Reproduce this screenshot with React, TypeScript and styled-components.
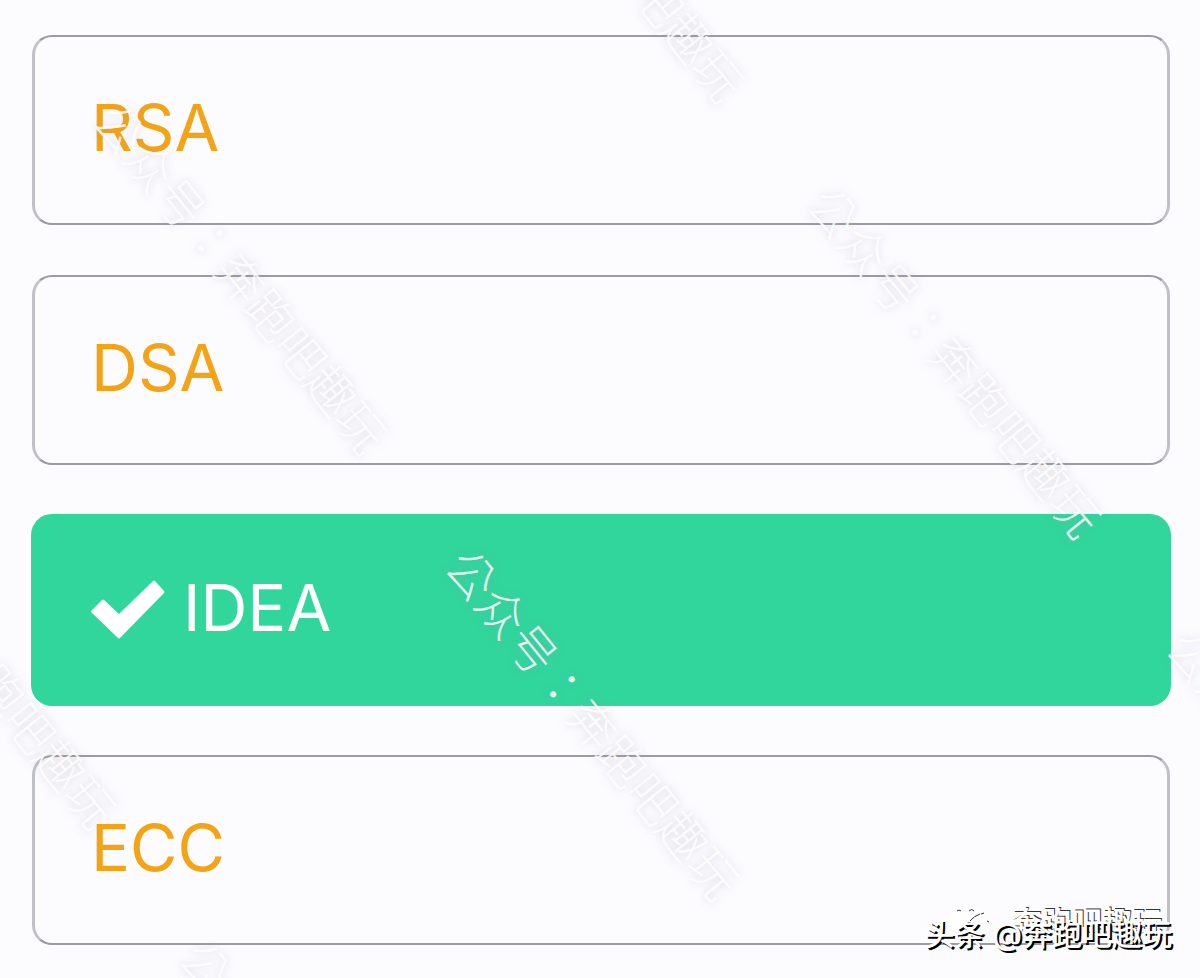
import React, { useState } from "react";
import styled, { createGlobalStyle } from "styled-components";

const GlobalStyle = createGlobalStyle`
  *, *::before, *::after { box-sizing: border-box; }
  body { margin: 0; background: #fcfbfe; }
`;

const Page = styled.main`
  position: relative;
  min-height: 100vh;
  padding: 35px 30px 33px 32px;
  overflow: hidden;
  font-family: Inter, "Noto Sans CJK SC", sans-serif;
`;

const Options = styled.fieldset`
  display: flex;
  flex-direction: column;
  gap: 50px;
  margin: 0;
  padding: 0;
  border: 0;
`;

const Option = styled.label<{ $selected: boolean }>`
  display: flex;
  align-items: center;
  gap: 18px;
  min-height: 190px;
  padding: 0 56px 4px;
  border-style: solid;
  border-width: 2px 3px;
  border-color: ${(p) => (p.$selected ? "#31d69d" : "#9c9ca2 #bfc0c8")};
  border-radius: 20px;
  background: ${(p) => (p.$selected ? "#31d69d" : "transparent")};
  box-shadow: ${(p) => (p.$selected ? "0 0 0 1px #31d69d" : "none")};
  color: ${(p) => (p.$selected ? "#ffffff" : "#f3a316")};
  font-size: 65px;
  line-height: 80px;
  cursor: pointer;
`;

const Radio = styled.input`
  position: absolute;
  width: 1px;
  height: 1px;
  margin: 0;
  opacity: 0;
`;

const Tick = styled.svg`
  width: 74px;
  height: 60px;
  margin-top: 4px;
  fill: currentColor;
`;

const Watermark = styled.span`
  position: absolute;
  width: 48px;
  height: 48px;
  color: rgba(255, 255, 255, 0.85);
  font: 300 48px/48px "Noto Sans CJK TC", sans-serif;
  white-space: nowrap;
  text-shadow: 0 0 8px rgba(150, 145, 165, 0.35);
  transform: rotate(51deg);
  pointer-events: none;
`;

const Credit = styled.div`
  position: absolute;
  right: 28px;
  bottom: 22px;
  color: #ffffff;
  font: 500 30px/44px Inter, "Noto Sans CJK SC", sans-serif;
  white-space: nowrap;
  text-shadow: 2px 2px 0 #000000;
`;

const Account = styled(Credit)`
  display: flex;
  align-items: center;
  gap: 22px;
  right: 38px;
  bottom: 34px;
  text-shadow: 1px -1px 0 #333336;
`;

const ChatMark = styled.svg`
  width: 42px;
  height: 36px;
`;

const answers = ["RSA", "DSA", "IDEA", "ECC"];

// Centre of the first character of each repeated mark.
const marks = [
  { x: 479, y: -225 },
  { x: 122, y: 127 },
  { x: 836, y: 211 },
  { x: -149, y: 502 },
  { x: 474, y: 573 },
  { x: 1195, y: 655 },
  { x: 208, y: 965 },
];

export default function App() {
  const [answer, setAnswer] = useState("IDEA");
  return (
    <Page>
      <GlobalStyle />
      <Options>
        {answers.map((name) => (
          <Option key={name} $selected={name === answer}>
            <Radio
              type="radio"
              name="algorithm"
              value={name}
              checked={name === answer}
              onChange={() => setAnswer(name)}
            />
            {name === answer && (
              <Tick viewBox="0 0 74 60" aria-hidden="true">
                <path d="M0 31 L11 20 Q12 19 13 20 L28 34 L62 1 Q63 0 64 1 L73 11 Q74 12 73 13 L29 58 Q28 59 27 58 L0 32 Z" />
              </Tick>
            )}
            {name}
          </Option>
        ))}
      </Options>
      {marks.map((m) => (
        <Watermark key={`${m.x},${m.y}`} style={{ left: m.x - 24, top: m.y - 24 }}>
          公众号：奔跑吧趣玩
        </Watermark>
      ))}
      <Account>
        <ChatMark viewBox="0 0 42 36" aria-hidden="true">
          <g fill="#ffffff">
            <ellipse cx="17" cy="14" rx="16" ry="13" />
            <ellipse cx="29" cy="23" rx="12" ry="10" />
          </g>
          <g fill="none" stroke="#333336" strokeWidth="1">
            <path d="M9 7 q2 -2 4 0 M21 7 q3 -3 5 0 M22 17 q4 -5 10 -7 M33 10 l3 -1 M39 17 l2 1" />
          </g>
        </ChatMark>
        奔跑吧趣玩
      </Account>
      <Credit>头条 @奔跑吧趣玩</Credit>
    </Page>
  );
}
